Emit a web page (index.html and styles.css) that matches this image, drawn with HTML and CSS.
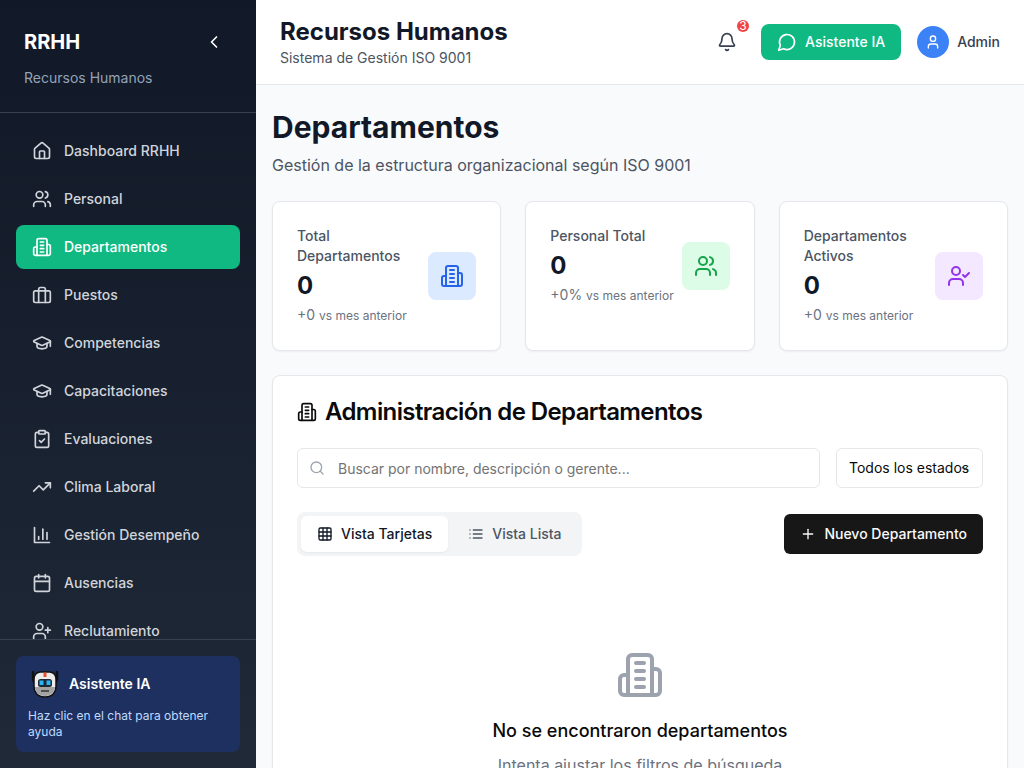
FILE: index.html
```html
<!DOCTYPE html>
<html lang="es">
<head>
	<meta charset="UTF-8">
	<title>Recursos Humanos</title>
	<link rel="stylesheet" href="styles.css">
</head>
<body>
	<svg class="sprite" width="0" height="0">
		<symbol id="i-building" viewBox="0 0 24 24"><path d="M6 22V4a2 2 0 0 1 2-2h8a2 2 0 0 1 2 2v18Z"/><path d="M6 12H4a2 2 0 0 0-2 2v6a2 2 0 0 0 2 2h2"/><path d="M18 9h2a2 2 0 0 1 2 2v9a2 2 0 0 1-2 2h-2"/><path d="M10 6h4"/><path d="M10 10h4"/><path d="M10 14h4"/><path d="M10 18h4"/></symbol>
		<symbol id="i-users" viewBox="0 0 24 24"><path d="M16 21v-2a4 4 0 0 0-4-4H6a4 4 0 0 0-4 4v2"/><circle cx="9" cy="7" r="4"/><path d="M22 21v-2a4 4 0 0 0-3-3.87"/><path d="M16 3.13a4 4 0 0 1 0 7.75"/></symbol>
		<symbol id="i-cap" viewBox="0 0 24 24"><path d="M21.42 10.922a1 1 0 0 0-.019-1.838L12.83 5.18a2 2 0 0 0-1.66 0L2.6 9.08a1 1 0 0 0 0 1.832l8.57 3.908a2 2 0 0 0 1.66 0z"/><path d="M22 10v6"/><path d="M6 12.5V16a6 3 0 0 0 12 0v-3.5"/></symbol>
	</svg>

	<aside class="sidebar">
		<div class="brand">
			<div class="brand-top">
				<span class="brand-name">RRHH</span>
				<svg class="icon chevron" viewBox="0 0 24 24"><path d="m15 18-6-6 6-6"/></svg>
			</div>
			<p class="brand-sub">Recursos Humanos</p>
		</div>

		<nav class="nav">
			<a class="nav-item"><svg class="icon" viewBox="0 0 24 24"><path d="M15 21v-8a1 1 0 0 0-1-1h-4a1 1 0 0 0-1 1v8"/><path d="M3 10a2 2 0 0 1 .709-1.528l7-5.999a2 2 0 0 1 2.582 0l7 5.999A2 2 0 0 1 21 10v9a2 2 0 0 1-2 2H5a2 2 0 0 1-2-2z"/></svg>Dashboard RRHH</a>
			<a class="nav-item"><svg class="icon"><use href="#i-users"/></svg>Personal</a>
			<a class="nav-item active"><svg class="icon"><use href="#i-building"/></svg>Departamentos</a>
			<a class="nav-item"><svg class="icon" viewBox="0 0 24 24"><path d="M16 21V5a2 2 0 0 0-2-2h-4a2 2 0 0 0-2 2v16"/><rect x="2" y="7" width="20" height="14" rx="2"/></svg>Puestos</a>
			<a class="nav-item"><svg class="icon"><use href="#i-cap"/></svg>Competencias</a>
			<a class="nav-item"><svg class="icon"><use href="#i-cap"/></svg>Capacitaciones</a>
			<a class="nav-item"><svg class="icon" viewBox="0 0 24 24"><rect x="8" y="2" width="8" height="4" rx="1"/><path d="M16 4h2a2 2 0 0 1 2 2v14a2 2 0 0 1-2 2H6a2 2 0 0 1-2-2V6a2 2 0 0 1 2-2h2"/><path d="m9 14 2 2 4-4"/></svg>Evaluaciones</a>
			<a class="nav-item"><svg class="icon" viewBox="0 0 24 24"><path d="M22 7 13.500 15.500 8.500 10.500 2 17"/><path d="M16 7h6v6"/></svg>Clima Laboral</a>
			<a class="nav-item"><svg class="icon" viewBox="0 0 24 24"><path d="M3 3v18h18"/><path d="M18 17V9"/><path d="M13 17V5"/><path d="M8 17v-3"/></svg>Gestión Desempeño</a>
			<a class="nav-item"><svg class="icon" viewBox="0 0 24 24"><path d="M8 2v4"/><path d="M16 2v4"/><rect x="3" y="4" width="18" height="18" rx="2"/><path d="M3 10h18"/></svg>Ausencias</a>
			<a class="nav-item"><svg class="icon" viewBox="0 0 24 24"><path d="M16 21v-2a4 4 0 0 0-4-4H6a4 4 0 0 0-4 4v2"/><circle cx="9" cy="7" r="4"/><path d="M19 8v6"/><path d="M22 11h-6"/></svg>Reclutamiento</a>
		</nav>

		<div class="side-foot">
			<div class="helper">
				<div class="helper-top">
					<svg class="robot" viewBox="0 0 28 28">
						<path d="M2 2v7c0 2 1 3 2.500 4M26 2v7c0 2-1 3-2.500 4" fill="none" stroke="#111" stroke-width="2.500" stroke-linecap="round"/>
						<path d="M9 2h10c4 .5 6 3.500 6 7.500v7C25 22.500 21 27 14 27S3 22.500 3 16.500v-7C3 5.500 5 2.500 9 2Z" fill="#ececec" stroke="#111" stroke-width="1.500"/>
						<path d="M4 17h20c0 5-4 9-10 9S4 22 4 17Z" fill="#a3a3a3"/>
						<rect x="12.500" y="2.500" width="3" height="4.500" fill="#e8502f"/>
						<rect x="7" y="9" width="14" height="8" rx="2.500" fill="#1f2933"/>
						<rect x="8.500" y="10.500" width="4" height="4.500" fill="#29b6f6"/>
						<rect x="15.500" y="10.500" width="4" height="4.500" fill="#29b6f6"/>
						<path d="M10 21h8" stroke="#333" stroke-width="1.500"/>
					</svg>
					<span>Asistente IA</span>
				</div>
				<p class="helper-text">Haz clic en el chat para obtener ayuda</p>
			</div>
		</div>
	</aside>

	<div class="page">
		<header class="topbar">
			<div>
				<h2 class="top-title">Recursos Humanos</h2>
				<p class="top-sub">Sistema de Gestión ISO 9001</p>
			</div>
			<div class="top-actions">
				<div class="bell">
					<svg class="icon" viewBox="0 0 24 24"><path d="M10.268 21a2 2 0 0 0 3.464 0"/><path d="M3.262 15.326A1 1 0 0 0 4 17h16a1 1 0 0 0 .74-1.673C19.410 13.956 18 12.499 18 8A6 6 0 0 0 6 8c0 4.499-1.411 5.956-2.738 7.326"/></svg>
					<span class="badge">3</span>
				</div>
				<button class="btn-chat"><svg class="icon" viewBox="0 0 24 24"><path d="M7.900 20A9 9 0 1 0 4 16.100L2 22Z"/></svg>Asistente IA</button>
				<div class="user">
					<span class="avatar"><svg class="icon" viewBox="0 0 24 24"><path d="M19 21v-2a4 4 0 0 0-4-4H9a4 4 0 0 0-4 4v2"/><circle cx="12" cy="7" r="4"/></svg></span>
					<span>Admin</span>
				</div>
			</div>
		</header>

		<main class="content">
			<h1 class="title">Departamentos</h1>
			<p class="subtitle">Gestión de la estructura organizacional según ISO 9001</p>

			<section class="stats">
				<div class="stat">
					<div class="stat-inner">
						<div>
							<p class="stat-label">Total Departamentos</p>
							<p class="stat-value">0</p>
							<p class="stat-change"><b>+0 </b>vs mes anterior</p>
						</div>
						<span class="stat-icon blue"><svg class="icon"><use href="#i-building"/></svg></span>
					</div>
				</div>
				<div class="stat">
					<div class="stat-inner">
						<div>
							<p class="stat-label">Personal Total</p>
							<p class="stat-value">0</p>
							<p class="stat-change"><b>+0% </b>vs mes anterior</p>
						</div>
						<span class="stat-icon green"><svg class="icon"><use href="#i-users"/></svg></span>
					</div>
				</div>
				<div class="stat">
					<div class="stat-inner">
						<div>
							<p class="stat-label">Departamentos Activos</p>
							<p class="stat-value">0</p>
							<p class="stat-change"><b>+0 </b>vs mes anterior</p>
						</div>
						<span class="stat-icon purple"><svg class="icon" viewBox="0 0 24 24"><path d="M16 21v-2a4 4 0 0 0-4-4H6a4 4 0 0 0-4 4v2"/><circle cx="9" cy="7" r="4"/><path d="m16 11 2 2 4-4"/></svg></span>
					</div>
				</div>
			</section>

			<section class="panel">
				<h2 class="panel-title"><svg class="icon"><use href="#i-building"/></svg>Administración de Departamentos</h2>

				<div class="filters">
					<div class="search">
						<svg class="icon" viewBox="0 0 24 24"><circle cx="11" cy="11" r="8"/><path d="m21 21-4.300-4.300"/></svg>
						<span>Buscar por nombre, descripción o gerente...</span>
					</div>
					<div class="select">Todos los estados<svg class="icon" viewBox="0 0 24 24"><path d="m6 9 6 6 6-6"/></svg></div>
				</div>

				<div class="toolbar">
					<div class="tabs">
						<span class="tab on"><svg class="icon" viewBox="0 0 24 24"><rect x="3" y="3" width="18" height="18" rx="2"/><path d="M3 9h18"/><path d="M3 15h18"/><path d="M9 3v18"/><path d="M15 3v18"/></svg>Vista Tarjetas</span>
						<span class="tab"><svg class="icon" viewBox="0 0 24 24"><path d="M3 12h.01"/><path d="M3 18h.01"/><path d="M3 6h.01"/><path d="M8 12h13"/><path d="M8 18h13"/><path d="M8 6h13"/></svg>Vista Lista</span>
					</div>
					<button class="btn-new"><svg class="icon" viewBox="0 0 24 24"><path d="M5 12h14"/><path d="M12 5v14"/></svg>Nuevo Departamento</button>
				</div>

				<div class="empty">
					<svg class="icon"><use href="#i-building"/></svg>
					<h3>No se encontraron departamentos</h3>
					<p>Intenta ajustar los filtros de búsqueda</p>
				</div>
			</section>
		</main>
	</div>
</body>
</html>
```

FILE: styles.css
```css
* {
	box-sizing: border-box;
}

html,
body {
	height: 100%;
}

body {
	margin: 0;
	display: flex;
	overflow: hidden;
	font-family: Inter, "Liberation Sans", sans-serif;
	font-size: 14px;
	line-height: 20px;
	color: #111827;
	background-color: #f9fafb;
}

p,
h1,
h2,
h3 {
	margin: 0;
}

.sprite {
	position: absolute;
}

.icon {
	width: 20px;
	height: 20px;
	flex: none;
	fill: none;
	stroke: currentColor;
	stroke-width: 2;
	stroke-linecap: round;
	stroke-linejoin: round;
}

/* sidebar */
.sidebar {
	width: 256px;
	flex: none;
	display: flex;
	flex-direction: column;
	height: 100%;
	color: #fff;
	background: linear-gradient(180deg, #111827, #1f2937);
}

.brand {
	height: 113px;
	flex: none;
	padding: 24px;
	border-bottom: 1px solid #374151;
}

.brand-top {
	display: flex;
	align-items: center;
	justify-content: space-between;
	height: 36px;
	margin-bottom: 8px;
}

.brand-name {
	font-size: 20px;
	font-weight: 700;
}

.chevron {
	margin-right: 8px;
}

.brand-sub {
	color: #94a3b8;
}

.nav {
	flex: 1;
	min-height: 0;
	overflow: hidden;
	display: flex;
	flex-direction: column;
	gap: 4px;
	padding: 16px;
}

.nav-item {
	height: 44px;
	flex: none;
	display: flex;
	align-items: center;
	gap: 12px;
	padding: 0 16px;
	border-radius: 8px;
	font-weight: 500;
	color: #d1d5db;
}

.nav-item.active {
	color: #fff;
	background-color: #10b981;
}

.side-foot {
	flex: none;
	padding: 16px;
	border-top: 1px solid #374151;
}

.helper {
	height: 96px;
	padding: 12px;
	border-radius: 8px;
	background-color: #1e3060;
}

.helper-top {
	display: flex;
	align-items: center;
	gap: 10px;
	height: 32px;
	margin-bottom: 8px;
	font-weight: 600;
}

.robot {
	width: 28px;
	height: 28px;
	margin-left: 3px;
}

.helper-text {
	font-size: 12px;
	line-height: 16px;
	color: #bfdbfe;
}

/* top bar */
.page {
	flex: 1;
	min-width: 0;
	display: flex;
	flex-direction: column;
}

.topbar {
	height: 85px;
	flex: none;
	display: flex;
	align-items: center;
	justify-content: space-between;
	padding: 0 24px;
	background-color: #fff;
	border-bottom: 1px solid #e5e7eb;
}

.top-title {
	font-size: 24px;
	line-height: 32px;
	font-weight: 700;
}

.top-sub {
	color: #4b5563;
}

.top-actions {
	display: flex;
	align-items: center;
	gap: 16px;
}

.bell {
	position: relative;
	width: 36px;
	height: 36px;
	display: flex;
	align-items: center;
	justify-content: center;
	color: #374151;
}

.badge {
	position: absolute;
	top: -4px;
	right: -4px;
	width: 12px;
	height: 12px;
	border-radius: 50%;
	font-size: 12px;
	line-height: 12px;
	text-align: center;
	color: #fff;
	background-color: #ef4444;
}

.btn-chat {
	height: 36px;
	display: flex;
	align-items: center;
	gap: 8px;
	padding: 0 16px;
	border: 0;
	border-radius: 8px;
	font: 500 14px/20px Inter, sans-serif;
	color: #fff;
	background-color: #10b981;
}

.user {
	display: flex;
	align-items: center;
	gap: 8px;
	font-weight: 500;
	color: #374151;
}

.avatar {
	width: 32px;
	height: 32px;
	display: flex;
	align-items: center;
	justify-content: center;
	border-radius: 50%;
	color: #fff;
	background-color: #3b82f6;
}

.avatar .icon {
	width: 16px;
	height: 16px;
}

/* content */
.content {
	flex: 1;
	min-height: 0;
	overflow: hidden;
	padding: 24px 16px;
}

.title {
	font-size: 30px;
	line-height: 36px;
	font-weight: 700;
}

.subtitle {
	font-size: 16px;
	line-height: 24px;
	margin: 8px 0 24px;
	color: #4b5563;
}

.stats {
	display: grid;
	grid-template-columns: repeat(3, 1fr);
	gap: 24px;
	margin-bottom: 24px;
}

.stat,
.panel {
	border: 1px solid #e5e7eb;
	border-radius: 8px;
	background-color: #fff;
	box-shadow: 0 1px 2px rgba(0, 0, 0, .05);
}

.stat {
	padding: 24px;
}

.stat-inner {
	display: flex;
	align-items: center;
	justify-content: space-between;
}

.stat-label {
	font-weight: 500;
	color: #4b5563;
}

.stat-value {
	font-size: 24px;
	line-height: 32px;
	font-weight: 700;
	margin: 4px 0;
}

.stat-change {
	font-size: 12px;
	color: #6b7280;
}

.stat-change b {
	font-size: 14px;
	line-height: 1;
	font-weight: 400;
}

.stat-icon {
	width: 48px;
	height: 48px;
	flex: none;
	display: flex;
	align-items: center;
	justify-content: center;
	border-radius: 8px;
}

.stat-icon .icon {
	width: 24px;
	height: 24px;
}

.blue {
	color: #2563eb;
	background-color: #dbeafe;
}

.green {
	color: #16a34a;
	background-color: #dcfce7;
}

.purple {
	color: #9333ea;
	background-color: #f3e8ff;
}

.panel {
	padding: 24px;
}

.panel-title {
	display: flex;
	align-items: center;
	gap: 8px;
	font-size: 24px;
	line-height: 24px;
	font-weight: 600;
	letter-spacing: -.6px;
	color: #0a0a0a;
	margin-bottom: 24px;
}

.filters {
	display: flex;
	gap: 16px;
	margin-bottom: 24px;
}

.search {
	flex: 1;
	height: 40px;
	display: flex;
	align-items: center;
	gap: 13px;
	padding: 0 11px;
	border: 1px solid #e5e7eb;
	border-radius: 6px;
	color: #737373;
}

.search span {
	padding-top: 2px;
}

.search .icon {
	width: 16px;
	height: 16px;
	color: #9ca3af;
}

.select {
	position: relative;
	height: 40px;
	width: 147px;
	flex: none;
	display: flex;
	align-items: center;
	padding: 0 0 0 12px;
	border: 1px solid #e5e7eb;
	border-radius: 6px;
	color: #0a0a0a;
	background-color: #fff;
}

.select .icon {
	position: absolute;
	right: 13px;
	top: 15px;
	width: 9px;
	height: 9px;
	stroke-width: 3;
	color: #404040;
}

.toolbar {
	display: flex;
	align-items: center;
	justify-content: space-between;
}

.tabs {
	display: flex;
	gap: 4px;
	padding: 4px;
	border-radius: 8px;
	background-color: #f3f4f6;
}

.tab {
	height: 36px;
	display: flex;
	align-items: center;
	gap: 8px;
	padding: 0 16px;
	border-radius: 6px;
	font-weight: 500;
	color: #4b5563;
}

.tab.on {
	color: #111827;
	background-color: #fff;
	box-shadow: 0 1px 2px rgba(0, 0, 0, .05);
}

.tab .icon {
	width: 16px;
	height: 16px;
}

.btn-new {
	height: 40px;
	display: flex;
	align-items: center;
	gap: 8px;
	padding: 0 16px;
	border: 0;
	border-radius: 6px;
	font: 500 14px/20px Inter, sans-serif;
	color: #fafafa;
	background-color: #171717;
}

.btn-new .icon {
	width: 16px;
	height: 16px;
}

.empty {
	padding: 95px 0 48px;
	text-align: center;
}

.empty .icon {
	width: 48px;
	height: 48px;
	color: #9ca3af;
	display: block;
	margin: 0 auto 18px;
}

.empty h3 {
	font-size: 18px;
	line-height: 28px;
	font-weight: 500;
	color: #0a0a0a;
	margin-bottom: 8px;
}

.empty p {
	font-size: 16px;
	line-height: 24px;
	color: #6b7280;
}
```
